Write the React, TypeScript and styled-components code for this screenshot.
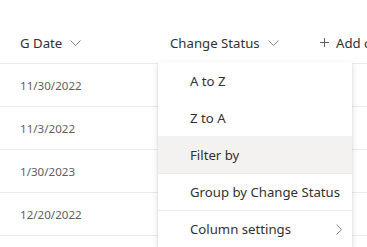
import { createGlobalStyle, styled } from "styled-components";

const GlobalStyle = createGlobalStyle`
  html, body {
    margin: 0;
    padding: 0;
    background: #ffffff;
    font-family: "Noto Sans", "Open Sans", sans-serif;
    color: #323130;
  }
`;

const dates = ["11/30/2022", "11/3/2022", "1/30/2023", "12/20/2022", ""];

type MenuEntry = { label: string; divider?: boolean; hovered?: boolean; sub?: boolean };

const menuItems: MenuEntry[] = [
  { label: "A to Z" },
  { label: "Z to A" },
  { label: "Filter by", hovered: true },
  { label: "Group by Change Status", divider: true },
  { label: "Column settings", divider: true, sub: true },
];

const ChevronDown = () => (
  <svg width="11" height="6" viewBox="0 0 11 6" fill="none">
    <path d="M0.5 0.5 L5.5 5.5 L10.5 0.5" stroke="#8a8886" strokeWidth="1" />
  </svg>
);

const ChevronRight = () => (
  <svg width="6" height="11" viewBox="0 0 6 11" fill="none">
    <path d="M0.5 0.5 L5.5 5.5 L0.5 10.5" stroke="#8a8886" strokeWidth="1" />
  </svg>
);

const Plus = () => (
  <svg width="9" height="9" viewBox="0 0 9 9" fill="none">
    <path d="M4.5 0 V9 M0 4.5 H9" stroke="#605e5c" strokeWidth="1" />
  </svg>
);

export default function App() {
  return (
    <>
      <GlobalStyle />
      <Page>
        <HeaderRow>
          <HeaderCell>
            G Date <ChevronDown />
          </HeaderCell>
          <HeaderCell>
            Change Status <ChevronDown />
          </HeaderCell>
          <AddCell>
            <Plus /> Add column
          </AddCell>
        </HeaderRow>
        {dates.map((d, i) => (
          <Row key={i}>
            <DateCell>{d}</DateCell>
          </Row>
        ))}

        <Menu>
          {menuItems.map((m) => (
            <MenuItem key={m.label} $hovered={m.hovered} $divider={m.divider}>
              <span>{m.label}</span>
              {m.sub && <ChevronRight />}
            </MenuItem>
          ))}
        </Menu>
      </Page>
    </>
  );
}

const Page = styled.div`
  position: relative;
  width: 367px;
  height: 247px;
  overflow: hidden;
`;

const HeaderRow = styled.div`
  display: flex;
  align-items: center;
  height: 64px;
  padding: 22px 0 0 20px;
  box-sizing: border-box;
  border-bottom: 1px solid #edebe9;
  white-space: nowrap;
`;

const HeaderCell = styled.div`
  display: flex;
  align-items: center;
  gap: 8px;
  width: 150px;
  flex-shrink: 0;
  font-size: 13.2px;
  color: #323130;

  svg {
    margin-top: 1px;
  }
`;

const AddCell = styled.div`
  display: flex;
  align-items: center;
  flex-shrink: 0;
  gap: 7px;
  font-size: 13.2px;
  color: #323130;
`;

const Row = styled.div`
  display: flex;
  align-items: center;
  height: 42px;
  padding-left: 20px;
  border-bottom: 1px solid #edebe9;
`;

const DateCell = styled.div`
  font-size: 11.6px;
  color: #605e5c;
`;

const Menu = styled.div`
  position: absolute;
  left: 158px;
  top: 62px;
  width: 194px;
  background: #ffffff;
  box-shadow: 0 3.2px 7.2px rgba(0, 0, 0, 0.13), 0 0.6px 1.8px rgba(0, 0, 0, 0.11);
`;

const MenuItem = styled.div<{ $hovered?: boolean; $divider?: boolean }>`
  display: flex;
  align-items: center;
  justify-content: space-between;
  height: 37px;
  box-sizing: border-box;
  padding: 0 10px 0 32px;
  font-size: 13.2px;
  color: #323130;
  white-space: nowrap;
  background: ${(p) => (p.$hovered ? "#f3f2f1" : "#ffffff")};
  border-top: 1px solid ${(p) => (p.$divider ? "#edebe9" : "transparent")};
`;
